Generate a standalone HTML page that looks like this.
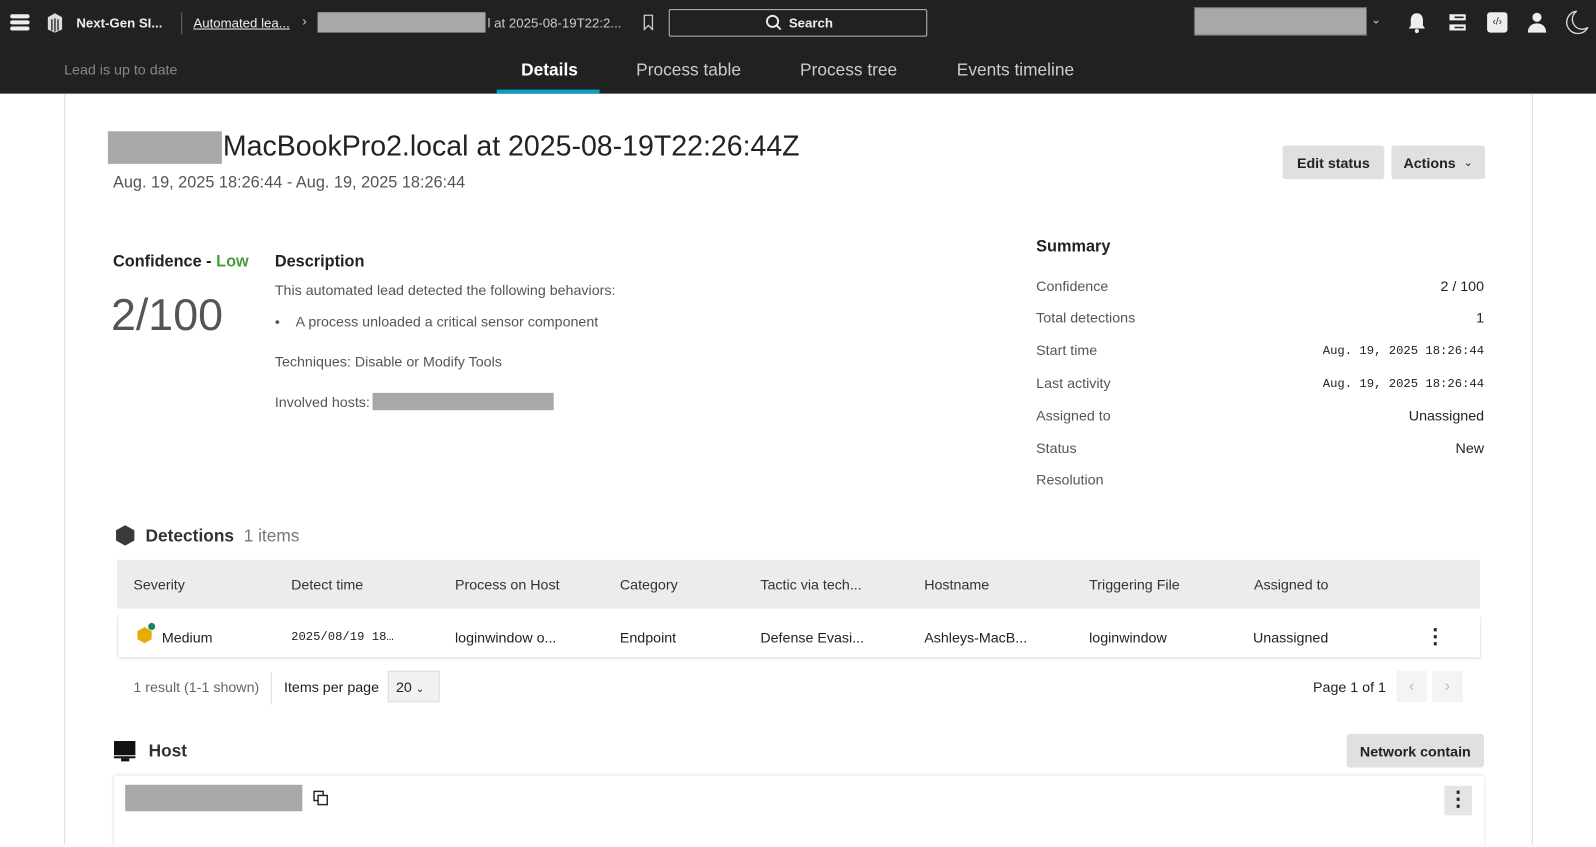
<!DOCTYPE html>
<html><head><meta charset="utf-8"><style>
*{box-sizing:border-box;margin:0;padding:0}
html,body{width:1596px;height:830px;overflow:hidden;background:#fff}
#w{position:absolute;left:0;top:0;width:1568px;height:816px;transform:scale(1.01786);transform-origin:0 0;font-family:"Liberation Sans",sans-serif;color:#222}
.abs{position:absolute}
.top{left:0;top:0;width:1568px;height:92px;background:#212121}
.gray{background:#a8a8a8}
.t{position:absolute;white-space:nowrap}
.mono{font-family:"Liberation Mono",monospace}
.btn{position:absolute;background:#e0e0e0;border-radius:3px;font-size:14px;font-weight:bold;color:#222;display:flex;align-items:center;justify-content:center}
</style></head><body><div id="w">
<div class="abs top"></div>
<div class="abs" style="left:10px;top:14px;width:19px;height:4px;background:#eee;border-radius:2px"></div>
<div class="abs" style="left:10px;top:20px;width:19px;height:4px;background:#eee;border-radius:2px"></div>
<div class="abs" style="left:10px;top:26px;width:19px;height:4px;background:#eee;border-radius:2px"></div>
<svg class="abs" style="left:44px;top:11px" width="20" height="22" viewBox="0 0 20 22"><path d="M3 6 L10 2 L17 6 L17 18 L10 21 L3 18Z" fill="#ddd"/><path d="M7 8v11M10 7v13M13 8v11" stroke="#212121" stroke-width="1.3"/></svg>
<div class="t" style="left:75px;top:15px;font-size:13px;font-weight:bold;color:#eee">Next-Gen SI...</div>
<div class="abs" style="left:178px;top:12px;width:1px;height:22px;background:#666"></div>
<div class="t" style="left:190px;top:15px;font-size:13px;color:#eee;text-decoration:underline">Automated lea...</div>
<div class="t" style="left:297px;top:13px;font-size:13px;color:#ccc">›</div>
<div class="abs gray" style="left:312px;top:12px;width:165px;height:20px"></div>
<div class="t" style="left:479px;top:15px;font-size:13px;color:#ccc">l at 2025-08-19T22:2...</div>
<svg class="abs" style="left:631px;top:14px" width="12" height="16"><path d="M2 1h8v14l-4-4-4 4z" fill="none" stroke="#ccc" stroke-width="1.3"/></svg>
<div class="abs" style="left:657px;top:9px;width:254px;height:27px;border:1px solid #bbb;border-radius:2px"></div>
<svg class="abs" style="left:752px;top:14px" width="16" height="16"><circle cx="7" cy="7" r="5.5" fill="none" stroke="#eee" stroke-width="1.8"/><path d="M11 11l4 4" stroke="#eee" stroke-width="1.8"/></svg>
<div class="t" style="left:775px;top:15px;font-size:13px;font-weight:bold;color:#eee">Search</div>
<div class="abs gray" style="left:1173px;top:7px;width:170px;height:28px;border:1px solid #666"></div>
<div class="t" style="left:1347px;top:12px;font-size:12px;color:#ccc">⌄</div>
<svg class="abs" style="left:1382px;top:11px" width="20" height="22"><path d="M10 2c-4 0-6 3-6 7v5l-2 3h16l-2-3v-5c0-4-2-7-6-7z" fill="#eee"/><circle cx="10" cy="19.5" r="2" fill="#eee"/></svg>
<svg class="abs" style="left:1421px;top:12px" width="22" height="20"><path d="M3 2h16v6H3zM3 12h16v6H3z" fill="#eee"/><path d="M8 5h9M8 15h9" stroke="#212121" stroke-width="1.5"/></svg>
<div class="abs" style="left:1461px;top:12px;width:20px;height:20px;background:#eee;border-radius:3px;font-size:10px;color:#212121;text-align:center;line-height:20px">‹/›</div>
<svg class="abs" style="left:1500px;top:11px" width="20" height="22"><circle cx="10" cy="6" r="4.5" fill="#eee"/><path d="M1 21c0-6 4-9 9-9s9 3 9 9z" fill="#eee"/></svg>
<svg class="abs" style="left:1537px;top:9px" width="24" height="26"><path d="M12 2a11 11 0 1 0 11 16a9 9 0 0 1-11-16z" fill="none" stroke="#ddd" stroke-width="1.3"/></svg>
<div class="t" style="left:63px;top:60px;font-size:14px;color:#888">Lead is up to date</div>
<div class="t" style="left:512px;top:59px;font-size:17px;font-weight:bold;color:#fff">Details</div>
<div class="abs" style="left:488px;top:88px;width:101px;height:4px;background:#0a9fc0"></div>
<div class="t" style="left:625px;top:59px;font-size:17px;color:#ccc">Process table</div>
<div class="t" style="left:786px;top:59px;font-size:17px;color:#ccc">Process tree</div>
<div class="t" style="left:940px;top:59px;font-size:17px;color:#ccc">Events timeline</div>
<div class="abs" style="left:63px;top:92px;width:1px;height:738px;background:#ddd"></div>
<div class="abs" style="left:1505px;top:92px;width:1px;height:738px;background:#ddd"></div>

<div class="abs gray" style="left:106px;top:129px;width:112px;height:32px"></div>
<div class="t" style="left:219px;top:128px;font-size:28px;color:#222">MacBookPro2.local at 2025-08-19T22:26:44Z</div>
<div class="t" style="left:111px;top:171px;font-size:16px;color:#555">Aug. 19, 2025 18:26:44 - Aug. 19, 2025 18:26:44</div>
<div class="btn" style="left:1260px;top:143px;width:100px;height:33px">Edit status</div>
<div class="btn" style="left:1367px;top:143px;width:92px;height:33px">Actions&nbsp;&nbsp;<span style="font-weight:normal;font-size:11px">⌄</span></div>

<div class="t" style="left:111px;top:249px;font-size:16px;font-weight:bold">Confidence - <span style="color:#4a9a3e">Low</span></div>
<div class="t" style="left:109px;top:285px;font-size:44px;color:#555;font-weight:300">2/100</div>
<div class="t" style="left:270px;top:249px;font-size:16px;font-weight:bold">Description</div>
<div class="t" style="left:270px;top:277px;font-size:14px;color:#555">This automated lead detected the following behaviors:</div>
<div class="t" style="left:270px;top:308px;font-size:14px;color:#555">•&nbsp;&nbsp;&nbsp;&nbsp;A process unloaded a critical sensor component</div>
<div class="t" style="left:270px;top:347px;font-size:14px;color:#555">Techniques: Disable or Modify Tools</div>
<div class="t" style="left:270px;top:387px;font-size:14px;color:#555">Involved hosts:</div>
<div class="abs gray" style="left:366px;top:386px;width:178px;height:17px"></div>

<div class="t" style="left:1018px;top:234px;font-size:16px;font-weight:bold">Summary</div>
<div class="t" style="left:1018px;top:273px;font-size:14px;color:#555">Confidence</div><div class="t" style="right:110px;top:273px;font-size:14px">2 / 100</div>
<div class="t" style="left:1018px;top:304px;font-size:14px;color:#555">Total detections</div><div class="t" style="right:110px;top:304px;font-size:14px">1</div>
<div class="t" style="left:1018px;top:336px;font-size:14px;color:#555">Start time</div><div class="t mono" style="right:110px;top:338px;font-size:12px">Aug. 19, 2025 18:26:44</div>
<div class="t" style="left:1018px;top:368px;font-size:14px;color:#555">Last activity</div><div class="t mono" style="right:110px;top:370px;font-size:12px">Aug. 19, 2025 18:26:44</div>
<div class="t" style="left:1018px;top:400px;font-size:14px;color:#555">Assigned to</div><div class="t" style="right:110px;top:400px;font-size:14px">Unassigned</div>
<div class="t" style="left:1018px;top:432px;font-size:14px;color:#555">Status</div><div class="t" style="right:110px;top:432px;font-size:14px">New</div>
<div class="t" style="left:1018px;top:463px;font-size:14px;color:#555">Resolution</div>

<svg class="abs" style="left:113px;top:515px" width="20" height="22"><path d="M10 1l9 5v10l-9 5-9-5V6z" fill="#3a3a3a"/></svg>
<div class="t" style="left:143px;top:517px;font-size:17px;font-weight:bold;color:#333">Detections <span style="font-weight:normal;color:#777">&nbsp;1 items</span></div>
<div class="abs" style="left:115px;top:550px;width:1339px;height:48px;background:#ececec"></div>
<div class="abs" style="left:116px;top:605px;width:1338px;height:41px;background:#fff;box-shadow:0 1px 2px rgba(0,0,0,.25)"></div>
<div class="t" style="left:131px;top:566px;font-size:14px;color:#333">Severity</div>
<div class="t" style="left:286px;top:566px;font-size:14px;color:#333">Detect time</div>
<div class="t" style="left:447px;top:566px;font-size:14px;color:#333">Process on Host</div>
<div class="t" style="left:609px;top:566px;font-size:14px;color:#333">Category</div>
<div class="t" style="left:747px;top:566px;font-size:14px;color:#333">Tactic via tech...</div>
<div class="t" style="left:908px;top:566px;font-size:14px;color:#333">Hostname</div>
<div class="t" style="left:1070px;top:566px;font-size:14px;color:#333">Triggering File</div>
<div class="t" style="left:1232px;top:566px;font-size:14px;color:#333">Assigned to</div>
<svg class="abs" style="left:133px;top:612px" width="20" height="22"><path d="M9 4l7 4v8l-7 4-7-4V8z" fill="#e8ac00"/><circle cx="16" cy="3.5" r="3.5" fill="#14875e"/></svg>
<div class="t" style="left:159px;top:618px;font-size:14px">Medium</div>
<div class="t mono" style="left:286px;top:619px;font-size:12px">2025/08/19 18…</div>
<div class="t" style="left:447px;top:618px;font-size:14px">loginwindow o...</div>
<div class="t" style="left:609px;top:618px;font-size:14px">Endpoint</div>
<div class="t" style="left:747px;top:618px;font-size:14px">Defense Evasi...</div>
<div class="t" style="left:908px;top:618px;font-size:14px">Ashleys-MacB...</div>
<div class="t" style="left:1070px;top:618px;font-size:14px">loginwindow</div>
<div class="t" style="left:1231px;top:618px;font-size:14px">Unassigned</div>
<div class="t" style="left:1400px;top:613px;font-size:20px;font-weight:bold">⋮</div>

<div class="t" style="left:131px;top:667px;font-size:14px;color:#666">1 result (1-1 shown)</div>
<div class="abs" style="left:266px;top:660px;width:1px;height:32px;background:#ddd"></div>
<div class="t" style="left:279px;top:667px;font-size:14px">Items per page</div>
<div class="abs" style="left:381px;top:659px;width:51px;height:31px;background:#f1f1f1;border:1px solid #ddd"></div>
<div class="t" style="left:389px;top:667px;font-size:14px">20 <span style="font-size:10px">⌄</span></div>
<div class="t" style="left:1290px;top:667px;font-size:14px">Page 1 of 1</div>
<div class="abs" style="left:1372px;top:659px;width:30px;height:31px;background:#f4f4f4;color:#bbb;text-align:center;line-height:31px">‹</div>
<div class="abs" style="left:1407px;top:659px;width:30px;height:31px;background:#f4f4f4;color:#bbb;text-align:center;line-height:31px">›</div>

<svg class="abs" style="left:111px;top:727px" width="24" height="22"><rect x="1" y="1" width="21" height="14" fill="#111"/><rect x="1" y="16" width="21" height="2" fill="#111"/><rect x="8" y="18" width="8" height="3" fill="#111"/></svg>
<div class="t" style="left:146px;top:728px;font-size:17px;font-weight:bold;color:#333">Host</div>
<div class="btn" style="left:1323px;top:721px;width:135px;height:33px">Network contain</div>
<div class="abs" style="left:112px;top:762px;width:1346px;height:70px;background:#fff;box-shadow:0 0 3px rgba(0,0,0,.2)"></div>
<div class="abs gray" style="left:123px;top:771px;width:174px;height:26px"></div>
<svg class="abs" style="left:307px;top:776px" width="16" height="16"><rect x="1.5" y="1.5" width="9" height="9" fill="none" stroke="#222" stroke-width="1.4"/><rect x="5.5" y="5.5" width="9" height="9" fill="#fff" stroke="#222" stroke-width="1.4"/></svg>
<div class="abs" style="left:1419px;top:772px;width:27px;height:29px;background:#e4e4e4;text-align:center;font-size:20px;font-weight:bold;line-height:29px">⋮</div>
</div></body></html>
